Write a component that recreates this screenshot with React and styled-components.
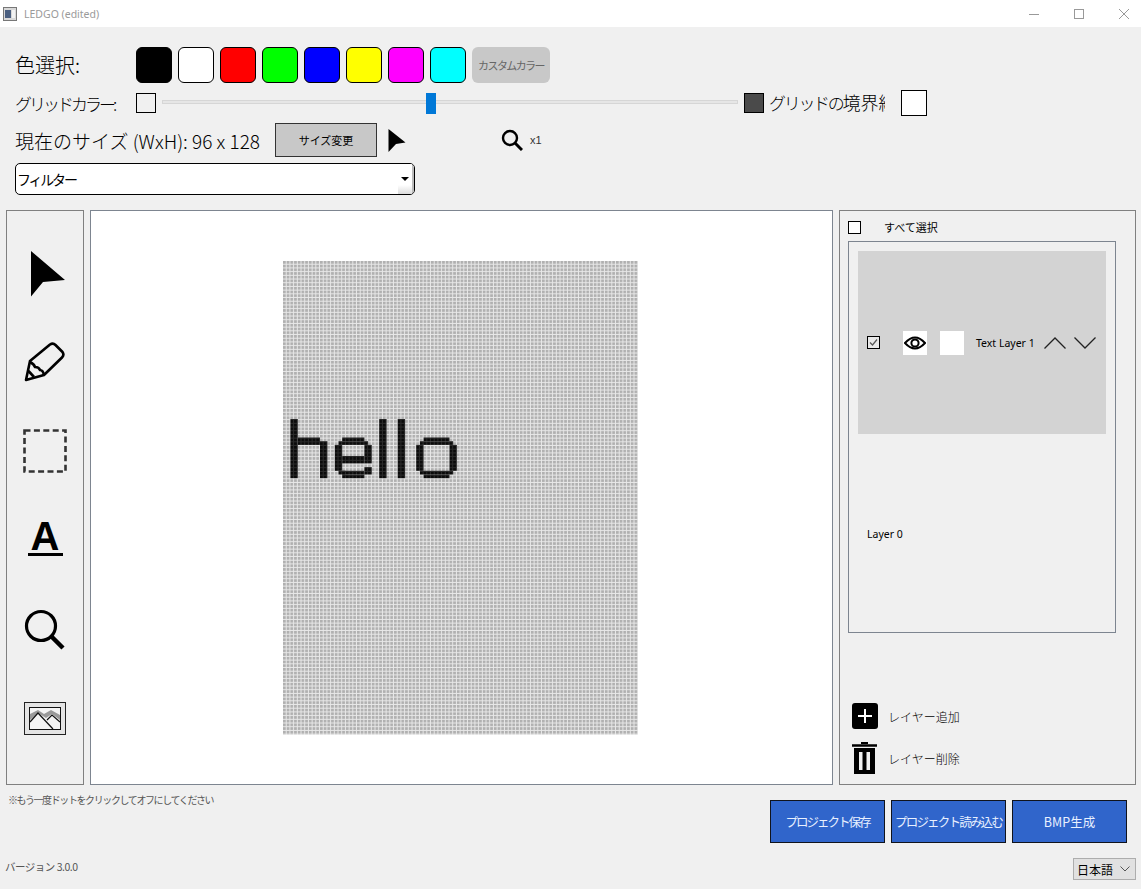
import React from 'react';
import styled, { createGlobalStyle } from 'styled-components';

const GlobalStyle = createGlobalStyle`
  html, body { margin: 0; padding: 0; background: #f0f0f0; }
  * { box-sizing: border-box; }
  body { font-family: "Noto Sans CJK JP", "Liberation Sans", sans-serif; color: #000; }
`;

const COLORS = ['#000000', '#ffffff', '#ff0000', '#00ff00', '#0000ff', '#ffff00', '#ff00ff', '#00ffff'];
const CELL = 3.7;

// hello bitmap: [col, row, width, height] in grid cells
const DOTS = [
  [2, 0, 2, 16], [4, 5, 6, 2], [10, 6, 2, 10],
  [16, 5, 6, 1], [15, 6, 8, 1], [14, 7, 2, 7], [22, 7, 2, 5], [16, 10, 6, 2],
  [15, 14, 2, 1], [22, 13, 2, 2], [16, 15, 6, 1], [16, 14, 6, 1],
  [26, 0, 2, 16], [31, 0, 2, 16],
  [38, 5, 7, 1], [37, 6, 9, 1], [36, 7, 2, 7], [45, 7, 2, 7], [37, 14, 9, 1], [38, 15, 7, 1],
];

const Window = styled.div`
  width: 1141px;
  height: 889px;
  display: flex;
  flex-direction: column;
  overflow: hidden;
  background: #f0f0f0;
`;

const TitleBar = styled.div`
  height: 27px;
  flex: none;
  background: #fff;
  display: flex;
  align-items: center;
  padding: 0 12px 0 3px;
  font-size: 10.5px;
  color: #9a9a9a;
  font-family: "Noto Sans", sans-serif;
`;

const AppIcon = styled.svg`
  width: 14px;
  height: 14px;
  margin-right: 7px;
`;

const TitleText = styled.span`
  flex: 1;
`;

const WinControls = styled.div`
  display: flex;
  gap: 35px;
  align-items: center;
`;

const WinIcon = styled.svg`
  width: 10px;
  height: 10px;
  display: block;
`;

const Toolbar = styled.div`
  height: 183px;
  flex: none;
  padding: 20px 15px 0;
  display: flex;
  flex-direction: column;
`;

const Row = styled.div`
  display: flex;
  align-items: center;
  height: ${p => p.$h}px;
  margin-top: ${p => p.$mt || 0}px;
`;

const BigLabel = styled.span`
  font-size: ${p => p.$size || 19}px;
  letter-spacing: ${p => p.$track || 0}px;
  line-height: 1;
  font-weight: 300;
  white-space: nowrap;
  width: ${p => (p.$w ? `${p.$w}px` : 'auto')};
  flex: none;
`;

const Swatches = styled.div`
  display: flex;
  gap: 6px;
`;

const Swatch = styled.div`
  width: 36px;
  height: 36px;
  background: ${p => p.$color};
  border: 1px solid #000;
  border-radius: 6px;
`;

const CustomButton = styled.div`
  width: 78px;
  height: 36px;
  background: #c8c8c8;
  border-radius: 6px;
  font-size: 11px;
  letter-spacing: -1.6px;
  color: #666;
  display: flex;
  align-items: center;
  justify-content: center;
  white-space: nowrap;
`;

const GridSwatch = styled.div`
  width: 20px;
  height: 20px;
  flex: none;
  background: ${p => p.$color};
  border: 1px solid #000;
`;

const Slider = styled.div`
  position: relative;
  width: 576px;
  height: 21px;
  margin: 0 6px;
  display: flex;
  align-items: center;
  flex: none;
`;

const SliderTrack = styled.div`
  width: 100%;
  height: 4px;
  background: #e6e6e6;
  border: 1px solid #d6d6d6;
  margin-top: -3px;
`;

const SliderThumb = styled.div`
  position: absolute;
  left: 264px;
  top: 0;
  width: 10px;
  height: 21px;
  background: #0078d7;
`;

const ClippedLabel = styled.div`
  width: 116px;
  margin-left: 5px;
  overflow: hidden;
  font-size: 18px;
  line-height: 1.3;
  white-space: nowrap;
  font-weight: 300;
`;

const TightKana = styled.span`
  font-size: 17px;
  letter-spacing: -2.3px;
`;

const BorderSwatch = styled.div`
  width: 26px;
  height: 26px;
  margin-left: 16px;
  background: #fff;
  border: 1px solid #000;
`;

const SizeButton = styled.div`
  width: 102px;
  height: 34px;
  margin-left: 15px;
  background: #c8c8c8;
  border: 1px solid #333;
  font-size: 11px;
  display: flex;
  align-items: center;
  justify-content: center;
`;

const SmallArrow = styled.svg`
  width: 18px;
  height: 23px;
  margin-left: 11px;
  flex: none;
`;

const SmallLens = styled.svg`
  width: 22px;
  height: 22px;
  margin-left: 95px;
  flex: none;
`;

const ZoomText = styled.span`
  font-size: 11px;
  color: #333;
  margin-left: 7px;
  font-family: "Liberation Sans", sans-serif;
`;

const Combo = styled.div`
  width: 400px;
  height: 32px;
  background: #fff;
  border: 1px solid #000;
  border-radius: 5px;
  display: flex;
  align-items: center;
  justify-content: space-between;
  overflow: hidden;
  font-size: 14px;
  letter-spacing: -2.2px;
  padding-left: 1px;
`;

const ComboArrow = styled.div`
  width: 16px;
  height: 100%;
  background: linear-gradient(#fff, #fff 70%, #dcdcdc);
  border-right: 2px solid #bbb;
  display: flex;
  align-items: center;
  justify-content: center;
  &::after {
    content: '';
    border-left: 4px solid transparent;
    border-right: 4px solid transparent;
    border-top: 4px solid #000;
  }
`;

const Main = styled.div`
  height: 575px;
  flex: none;
  display: flex;
  padding: 0 5px 0 6px;
  gap: 6px;
`;

const ToolPanel = styled.div`
  width: 78px;
  flex: none;
  border: 1px solid #808080;
  padding-top: 18px;
  display: flex;
  flex-direction: column;
`;

const ToolSlot = styled.div`
  height: 89px;
  flex: none;
  display: flex;
  align-items: center;
  justify-content: center;
`;

const PointerIcon = styled.svg`
  display: block;
  margin-left: 5px;
  filter: blur(0.5px);
`;

const ToolLetter = styled.span`
  display: block;
  width: 35px;
  margin-top: -5px;
  font-family: "Liberation Sans", sans-serif;
  font-weight: 700;
  font-size: 40px;
  line-height: 32px;
  text-align: center;
  border-bottom: 3px solid #000;
  padding-bottom: 1px;
`;

const CanvasPanel = styled.div`
  width: 743px;
  flex: none;
  background: #fff;
  border: 1px solid #7d8590;
  display: flex;
  justify-content: center;
  padding: 50px 2px 0 0;
`;

const DotGrid = styled.svg`
  display: block;
  width: 355.2px;
  height: 473.6px;
`;

const LayerPanel = styled.div`
  width: 297px;
  flex: none;
  border: 1px solid #808080;
  padding: 9px 9px 10px 8px;
  display: flex;
  flex-direction: column;
`;

const SelectAll = styled.div`
  display: flex;
  align-items: center;
  height: 14px;
  font-size: 11px;
  margin-bottom: 7px;
`;

const CheckBox = styled.div`
  width: 13px;
  height: 13px;
  flex: none;
  border: 1px solid #000;
  background: ${p => p.$bg || '#fff'};
`;

const SelectAllLabel = styled.span`
  margin-left: 23px;
`;

const LayerList = styled.div`
  width: 268px;
  height: 392px;
  border: 1px solid #7d8590;
  padding: 9px;
  display: flex;
  flex-direction: column;
  gap: 8px;
`;

const LayerRow = styled.div`
  height: 183px;
  flex: none;
  background: ${p => (p.$selected ? '#d3d3d3' : 'transparent')};
  display: flex;
  align-items: center;
  padding-left: 9px;
  font-size: 10.5px;
  font-family: "Noto Sans", "Noto Sans CJK JP", sans-serif;
`;

const CheckMark = styled.svg`
  width: 11px;
  height: 11px;
  display: block;
`;

const LayerSquare = styled.div`
  width: 24px;
  height: 24px;
  flex: none;
  background: #fff;
  margin-left: ${p => p.$ml}px;
  display: flex;
  align-items: center;
  justify-content: center;
`;

const LayerName = styled.span`
  margin-left: 12px;
  width: 68px;
  white-space: nowrap;
  flex: none;
`;

const Chevron = styled.svg`
  width: 22px;
  height: 12px;
  flex: none;
  margin-left: ${p => p.$ml}px;
`;

const Spacer = styled.div`
  flex: 1;
`;

const ActionRow = styled.div`
  display: flex;
  align-items: center;
  font-size: 12px;
  height: ${p => p.$h}px;
  margin-bottom: ${p => p.$mb || 0}px;
  padding-left: 4px;
`;

const ActionLabel = styled.span`
  margin-left: ${p => p.$ml}px;
  font-weight: 300;
`;

const Footer = styled.div`
  flex: 1;
  display: grid;
  grid-template-columns: 1fr auto;
  padding: 0 5px 9px 5px;
`;

const FooterLeft = styled.div`
  display: flex;
  flex-direction: column;
  justify-content: space-between;
  color: #555;
  padding: 7px 0 6px 0;
`;

const Note = styled.span`
  font-size: 10px;
  letter-spacing: -1.4px;
  padding-left: 3px;
`;

const Version = styled.span`
  font-size: 10.5px;
  letter-spacing: -0.5px;
`;

const FooterRight = styled.div`
  display: flex;
  flex-direction: column;
  justify-content: space-between;
  align-items: flex-end;
  padding-top: 15px;
`;

const ActionButtons = styled.div`
  display: flex;
  gap: 6px;
  margin-right: 9px;
`;

const BlueButton = styled.div`
  width: 115px;
  height: 43px;
  background: #3065cb;
  border: 1px solid #10131c;
  color: #e8f0ff;
  font-size: 12.5px;
  letter-spacing: ${p => p.$track || 0}px;
  display: flex;
  align-items: center;
  justify-content: center;
  white-space: nowrap;
`;

const LangSelect = styled.div`
  width: 63px;
  height: 22px;
  background: #e1e1e1;
  border: 1px solid #adadad;
  font-size: 12px;
  display: flex;
  align-items: center;
  justify-content: space-between;
  padding: 0 5px 0 3px;
`;

const Lens = () => (
  <>
    <circle cx="9" cy="9" r="7" fill="none" stroke="#000" strokeWidth="2.4" />
    <path d="M14 14 L21 21" stroke="#000" strokeWidth="3" />
  </>
);

function DotCanvas() {
  return (
    <DotGrid viewBox="0 0 355.2 473.6">
      <defs>
        <pattern id="cells" width={CELL} height={CELL} patternUnits="userSpaceOnUse">
          <rect width={CELL} height={CELL} fill="#e8e8e8" />
          <rect width={CELL - 1} height={CELL - 1} fill="#b0b0b0" />
        </pattern>
        <pattern id="dots" width={CELL} height={CELL} patternUnits="userSpaceOnUse">
          <rect width={CELL} height={CELL} fill="#2c2c2c" />
          <rect width={CELL - 1} height={CELL - 1} fill="#0a0a0a" />
        </pattern>
      </defs>
      <rect width="355.2" height="473.6" fill="url(#cells)" />
      {DOTS.map(([c, r, w, h]) => (
        <rect
          key={`${c}-${r}`}
          x={c * CELL}
          y={(r + 42.7) * CELL}
          width={w * CELL}
          height={h * CELL}
          fill="url(#dots)"
        />
      ))}
    </DotGrid>
  );
}

export default function App() {
  return (
    <Window>
      <GlobalStyle />
      <TitleBar>
        <AppIcon viewBox="0 0 14 14">
          <rect x="0.5" y="0.5" width="13" height="13" fill="#d8d8d8" stroke="#777" />
          <rect x="2" y="3" width="6" height="8" fill="#4a5f80" />
          <rect x="9" y="3" width="3" height="8" fill="#f2f2f2" />
        </AppIcon>
        <TitleText>LEDGO (edited)</TitleText>
        <WinControls>
          <WinIcon viewBox="0 0 10 10"><path d="M0 5.5 H10" stroke="#999" /></WinIcon>
          <WinIcon viewBox="0 0 10 10"><rect x="0.5" y="0.5" width="9" height="9" fill="none" stroke="#999" /></WinIcon>
          <WinIcon viewBox="0 0 10 10"><path d="M0 0 L10 10 M10 0 L0 10" stroke="#999" /></WinIcon>
        </WinControls>
      </TitleBar>

      <Toolbar>
        <Row $h={36}>
          <BigLabel $w={121} $size={20}>色選択:</BigLabel>
          <Swatches>
            {COLORS.map(c => <Swatch key={c} $color={c} />)}
            <CustomButton>カスタムカラー</CustomButton>
          </Swatches>
        </Row>
        <Row $h={26} $mt={7}>
          <BigLabel $w={121} $size={17} $track={-3}>グリッドカラー:</BigLabel>
          <GridSwatch $color="#f0f0f0" />
          <Slider>
            <SliderTrack />
            <SliderThumb />
          </Slider>
          <GridSwatch $color="#4a4a4a" />
          <ClippedLabel><TightKana>グリッドの</TightKana>境界線</ClippedLabel>
          <BorderSwatch />
        </Row>
        <Row $h={34} $mt={7}>
          <BigLabel>現在のサイズ (WxH): 96 x 128</BigLabel>
          <SizeButton>サイズ変更</SizeButton>
          <SmallArrow viewBox="0 0 18 23">
            <path d="M0.5 0 L17.5 13.5 L8 15 L0.5 23 Z" fill="#000" />
          </SmallArrow>
          <SmallLens viewBox="0 0 22 22"><Lens /></SmallLens>
          <ZoomText>x1</ZoomText>
        </Row>
        <Row $h={32} $mt={6}>
          <Combo>
            フィルター
            <ComboArrow />
          </Combo>
        </Row>
      </Toolbar>

      <Main>
        <ToolPanel>
          <ToolSlot>
            <PointerIcon width="36" height="46" viewBox="0 0 36 46">
              <path d="M1 0 L35 29 L13 31 L1 45.5 Z" fill="#000" />
            </PointerIcon>
          </ToolSlot>
          <ToolSlot>
            <svg width="42" height="42" viewBox="0 0 42 42" fill="none" stroke="#000" strokeWidth="2.6" strokeLinejoin="round">
              <path d="M6 19 L26 2.5 Q29 0.5 31.5 3 L38.5 10 Q40.5 13 38 15.5 L20 33 L2 38 Z" />
              <path d="M6 20 Q10 22 11 25 Q15 25 16 28 Q19 28 20 33" />
              <path d="M4.5 29 L10 35" />
            </svg>
          </ToolSlot>
          <ToolSlot>
            <svg width="44" height="45" viewBox="0 0 44 45" fill="none" stroke="#333" strokeWidth="2.6">
              <rect x="1.5" y="1.5" width="41" height="41" strokeDasharray="6 3.4" />
            </svg>
          </ToolSlot>
          <ToolSlot>
            <ToolLetter>A</ToolLetter>
          </ToolSlot>
          <ToolSlot>
            <svg width="42" height="42" viewBox="0 0 42 42" fill="none" stroke="#000">
              <circle cx="17" cy="17" r="14.5" strokeWidth="3.2" />
              <path d="M27 27 L39 39" strokeWidth="4.5" />
            </svg>
          </ToolSlot>
          <ToolSlot>
            <svg width="42" height="33" viewBox="0 0 42 33">
              <rect x="0.5" y="0.5" width="41" height="32" fill="#e4e4e4" stroke="#222" />
              <rect x="5.5" y="5.5" width="31" height="22" fill="#f4f4f4" stroke="#111" />
              <path d="M6 12 L14 8 L20 12 L27 8 L36 13 L36 18 L28 12 L22 16 L14 11 L6 18 Z" fill="#9a9a9a" />
              <path d="M6 20 L14 11 L29 27 M23 18 L28 13 L36 20" fill="none" stroke="#111" strokeWidth="1.2" />
            </svg>
          </ToolSlot>
        </ToolPanel>

        <CanvasPanel>
          <DotCanvas />
        </CanvasPanel>

        <LayerPanel>
          <SelectAll>
            <CheckBox />
            <SelectAllLabel>すべて選択</SelectAllLabel>
          </SelectAll>
          <LayerList>
            <LayerRow $selected>
              <CheckBox $bg="#e8e8e8">
                <CheckMark viewBox="0 0 11 11">
                  <path d="M2 5.5 L4.5 8 L9 2.5" fill="none" stroke="#555" strokeWidth="1.2" />
                </CheckMark>
              </CheckBox>
              <LayerSquare $ml={23}>
                <svg width="22" height="18" viewBox="0 0 22 18" fill="none" stroke="#000">
                  <path d="M1 9 Q11 -2 21 9 Q11 20 1 9 Z" strokeWidth="2" />
                  <circle cx="11" cy="9" r="3.6" strokeWidth="2" />
                </svg>
              </LayerSquare>
              <LayerSquare $ml={13} />
              <LayerName>Text Layer 1</LayerName>
              <Chevron $ml={0} viewBox="0 0 22 12">
                <path d="M0.5 11.5 L11 1 L21.5 11.5" fill="none" stroke="#222" strokeWidth="1.3" />
              </Chevron>
              <Chevron $ml={8} viewBox="0 0 22 12">
                <path d="M0.5 0.5 L11 11 L21.5 0.5" fill="none" stroke="#222" strokeWidth="1.3" />
              </Chevron>
            </LayerRow>
            <LayerRow>Layer 0</LayerRow>
          </LayerList>
          <Spacer />
          <ActionRow $h={26} $mb={13}>
            <svg width="26" height="26" viewBox="0 0 26 26">
              <rect width="26" height="26" rx="3" fill="#000" />
              <path d="M13 6 V20 M6 13 H20" stroke="#fff" strokeWidth="2" />
            </svg>
            <ActionLabel $ml={10}>レイヤー追加</ActionLabel>
          </ActionRow>
          <ActionRow $h={32}>
            <svg width="25" height="32" viewBox="0 0 25 32">
              <path d="M0 3.5 H25" stroke="#000" strokeWidth="2.5" />
              <rect x="9" y="0" width="7" height="2" fill="#000" />
              <rect x="2" y="6" width="21" height="26" fill="#000" />
              <rect x="7" y="10" width="3.5" height="18" fill="#f0f0f0" />
              <rect x="14.5" y="10" width="3.5" height="18" fill="#f0f0f0" />
            </svg>
            <ActionLabel $ml={11}>レイヤー削除</ActionLabel>
          </ActionRow>
        </LayerPanel>
      </Main>

      <Footer>
        <FooterLeft>
          <Note>※もう一度ドットをクリックしてオフにしてください</Note>
          <Version>バージョン 3.0.0</Version>
        </FooterLeft>
        <FooterRight>
          <ActionButtons>
            <BlueButton $track={-2}>プロジェクト保存</BlueButton>
            <BlueButton $track={-1.8}>プロジェクト読み込む</BlueButton>
            <BlueButton>BMP生成</BlueButton>
          </ActionButtons>
          <LangSelect>
            日本語
            <svg width="10" height="6" viewBox="0 0 10 6">
              <path d="M0.5 0.5 L5 5 L9.5 0.5" fill="none" stroke="#555" />
            </svg>
          </LangSelect>
        </FooterRight>
      </Footer>
    </Window>
  );
}
